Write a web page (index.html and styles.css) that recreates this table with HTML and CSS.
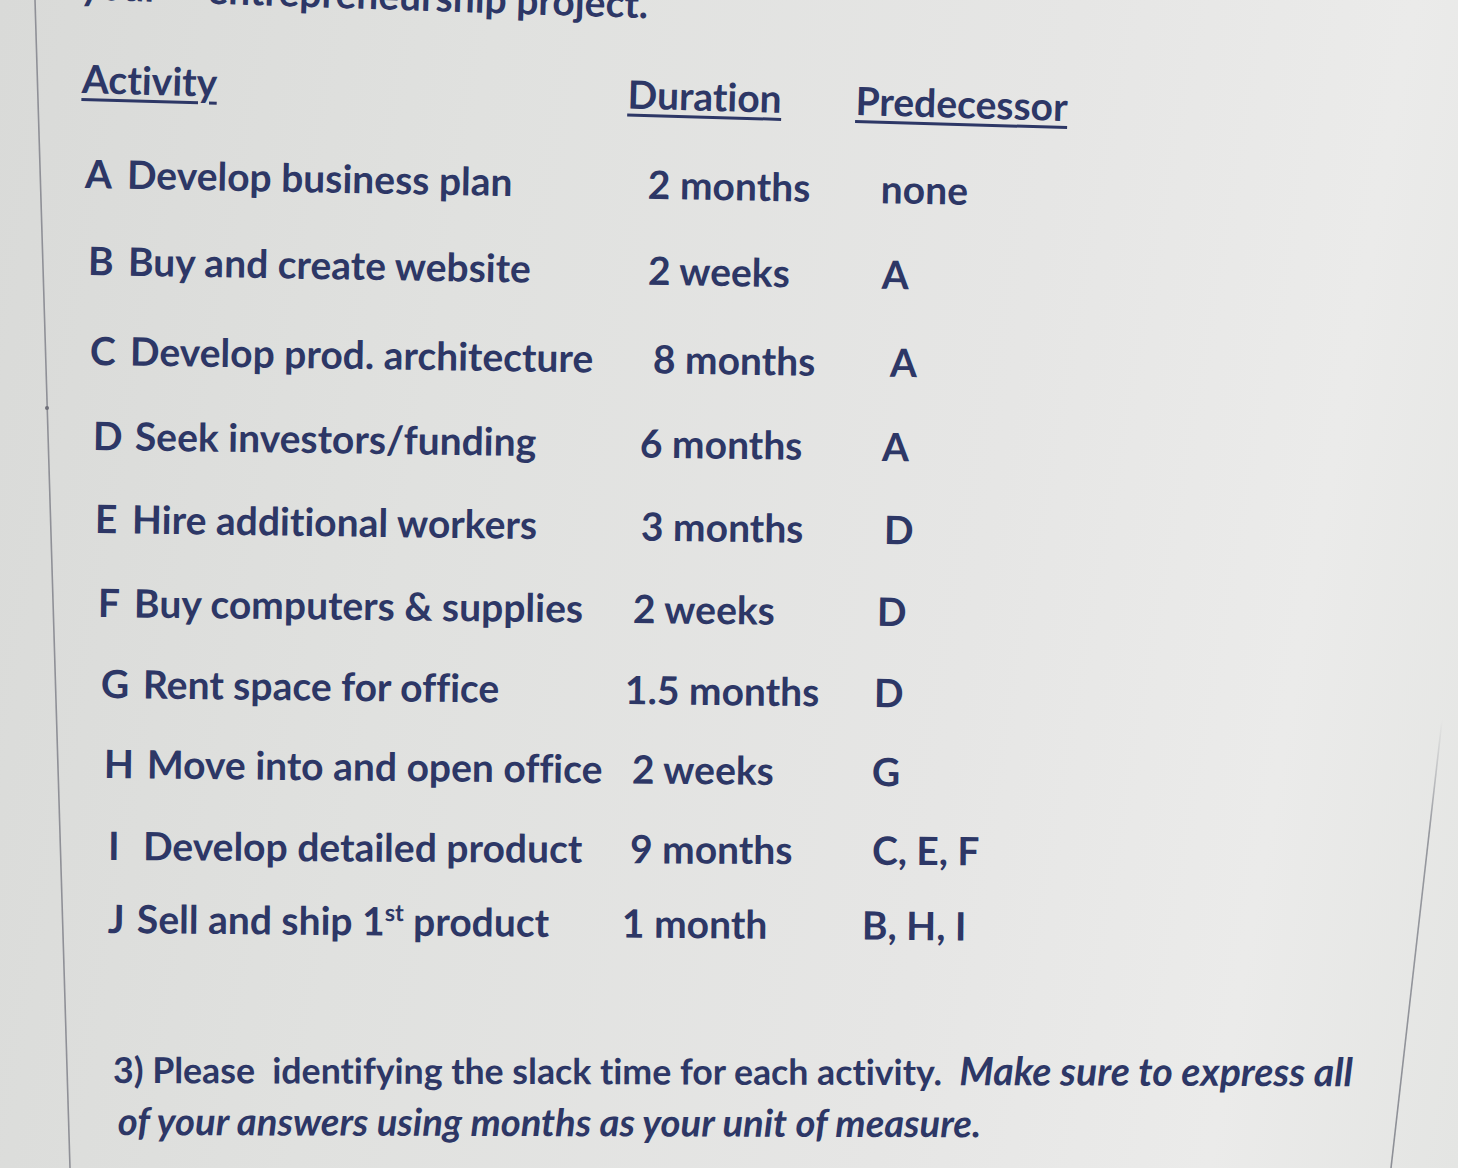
FILE: index.html
```html
<!DOCTYPE html>
<html lang="en">
<head>
<meta charset="utf-8">
<title>Entrepreneurship project activities</title>
<link rel="stylesheet" href="styles.css">
</head>
<body>
<div class="page">
  <svg class="edges" width="1458" height="1168" viewBox="0 0 1458 1168" aria-hidden="true">
    <defs>
      <linearGradient id="fade" x1="0" y1="0" x2="0" y2="1">
        <stop offset="0" stop-color="#8d8f96" stop-opacity="0"/>
        <stop offset="0.25" stop-color="#8d8f96" stop-opacity="0.9"/>
        <stop offset="1" stop-color="#8d8f96" stop-opacity="1"/>
      </linearGradient>
    </defs>
    <line x1="35" y1="0" x2="70" y2="1168" stroke="#8f9097" stroke-width="1.6"/>
    <circle cx="47" cy="408" r="2" fill="#6f7079"/>
    <line x1="1442" y1="720" x2="1391" y2="1168" stroke="url(#fade)" stroke-width="1.6"/>
  </svg>

  <p class="cut">your <span class="cut-rest">entrepreneurship project.</span></p>

  <div class="table">
    <div class="head">
      <span class="h-act">Activity</span>
      <span class="h-dur">Duration</span>
      <span class="h-pred">Predecessor</span>
    </div>

    <div class="row ra"><span class="ltr">A</span><span class="name">Develop business plan</span><span class="dur">2 months</span><span class="pred">none</span></div>
    <div class="row rb"><span class="ltr">B</span><span class="name">Buy and create website</span><span class="dur">2 weeks</span><span class="pred">A</span></div>
    <div class="row rc"><span class="ltr">C</span><span class="name">Develop prod. architecture</span><span class="dur">8 months</span><span class="pred">A</span></div>
    <div class="row rd"><span class="ltr">D</span><span class="name">Seek investors/funding</span><span class="dur">6 months</span><span class="pred">A</span></div>
    <div class="row re"><span class="ltr">E</span><span class="name">Hire additional workers</span><span class="dur">3 months</span><span class="pred">D</span></div>
    <div class="row rf"><span class="ltr">F</span><span class="name">Buy computers &amp; supplies</span><span class="dur">2 weeks</span><span class="pred">D</span></div>
    <div class="row rg"><span class="ltr">G</span><span class="name">Rent space for office</span><span class="dur">1.5 months</span><span class="pred">D</span></div>
    <div class="row rh"><span class="ltr">H</span><span class="name">Move into and open office</span><span class="dur">2 weeks</span><span class="pred">G</span></div>
    <div class="row ri"><span class="ltr">I</span><span class="name">Develop detailed product</span><span class="dur">9 months</span><span class="pred">C, E, F</span></div>
    <div class="row rj"><span class="ltr">J</span><span class="name">Sell and ship 1<sup class="sup">st</sup> product</span><span class="dur">1 month</span><span class="pred">B, H, I</span></div>
  </div>

  <p class="question">3) Please&nbsp; identifying the slack time for each activity.&nbsp; <em>Make sure to express all</em><br><em class="line2">of your answers using months as your unit of measure.</em></p>
</div>
</body>
</html>
```

FILE: styles.css
```css
* { box-sizing: border-box; }

html, body {
  margin: 0;
  padding: 0;
}

body {
  width: 1458px;
  height: 1168px;
  overflow: hidden;
  font-family: Lato, "Liberation Sans", sans-serif;
  font-weight: 700;
  font-variant-ligatures: none;
  color: #2d3766;
  background: linear-gradient(100deg, #d9dad8 0%, #e0e1df 30%, #e6e6e5 65%, #ebebea 85%, #e4e5e3 100%);
}

.page {
  position: relative;
  width: 1458px;
  height: 1168px;
  overflow: hidden;
}

.edges {
  position: absolute;
  left: 0;
  top: 0;
  pointer-events: none;
}

.cut {
  margin: -19px 0 0 0;
  padding-left: 80px;
  font-size: 39px;
  line-height: 44px;
  white-space: nowrap;
  transform: rotate(1.9deg);
  transform-origin: 640px 22px;
}

.cut-rest {
  margin-left: 40px;
}

.table {
  margin-top: 31px;
}

.head {
  display: flex;
  height: 95px;
  padding-left: 82px;
  font-size: 39px;
  line-height: 44px;
  white-space: nowrap;
  transform: rotate(1.63deg);
  transform-origin: 82px 22px;
}

.head span {
  text-decoration: underline;
  text-decoration-thickness: 3px;
  text-underline-offset: 5px;
}

.h-act { width: 546px; }
.h-dur { width: 228px; }

.row {
  display: flex;
  height: var(--h);
  padding-left: var(--l);
  font-size: 39px;
  line-height: 44px;
  white-space: nowrap;
  transform: rotate(var(--r));
  transform-origin: var(--l) 22px;
}

.ltr { width: var(--n); flex: none; }
.name { width: var(--dw); flex: none; }
.dur { width: var(--pw); flex: none; }
.pred { flex: none; }

.sup {
  font-size: 0.6em;
  line-height: 0;
  vertical-align: 0.62em;
}

.ra { --l: 85px;  --n: 42px; --dw: 521px; --pw: 233px; --r: 1.09deg; --h: 87px; }
.rb { --l: 88px;  --n: 40px; --dw: 520px; --pw: 234px; --r: 1.0deg;  --h: 90px; }
.rc { --l: 90px;  --n: 40px; --dw: 523px; --pw: 237px; --r: 0.85deg; --h: 85px; }
.rd { --l: 93px;  --n: 42px; --dw: 505px; --pw: 242px; --r: 0.79deg; --h: 83px; }
.re { --l: 95px;  --n: 37px; --dw: 509px; --pw: 243px; --r: 0.79deg; --h: 84px; }
.rf { --l: 98px;  --n: 36px; --dw: 499px; --pw: 244px; --r: 0.65deg; --h: 81px; }
.rg { --l: 101px; --n: 42px; --dw: 482px; --pw: 249px; --r: 0.66deg; --h: 80px; }
.rh { --l: 104px; --n: 43px; --dw: 485px; --pw: 240px; --r: 0.59deg; --h: 82px; }
.ri { --l: 108px; --n: 35px; --dw: 487px; --pw: 242px; --r: 0.35deg; --h: 73px; }
.rj { --l: 108px; --n: 29px; --dw: 485px; --pw: 240px; --r: 0.5deg;  --h: 44px; }

.question {
  margin: 103px 0 0 0;
  padding-left: 113px;
  font-size: 35.7px;
  line-height: 50px;
  white-space: nowrap;
  transform: rotate(0.15deg);
  transform-origin: 113px 25px;
}

.question em {
  font-style: italic;
  font-size: 1.1em;
}

.question em.line2 {
  display: inline-block;
  margin-left: 5px;
  font-size: 1.07em;
}
```
